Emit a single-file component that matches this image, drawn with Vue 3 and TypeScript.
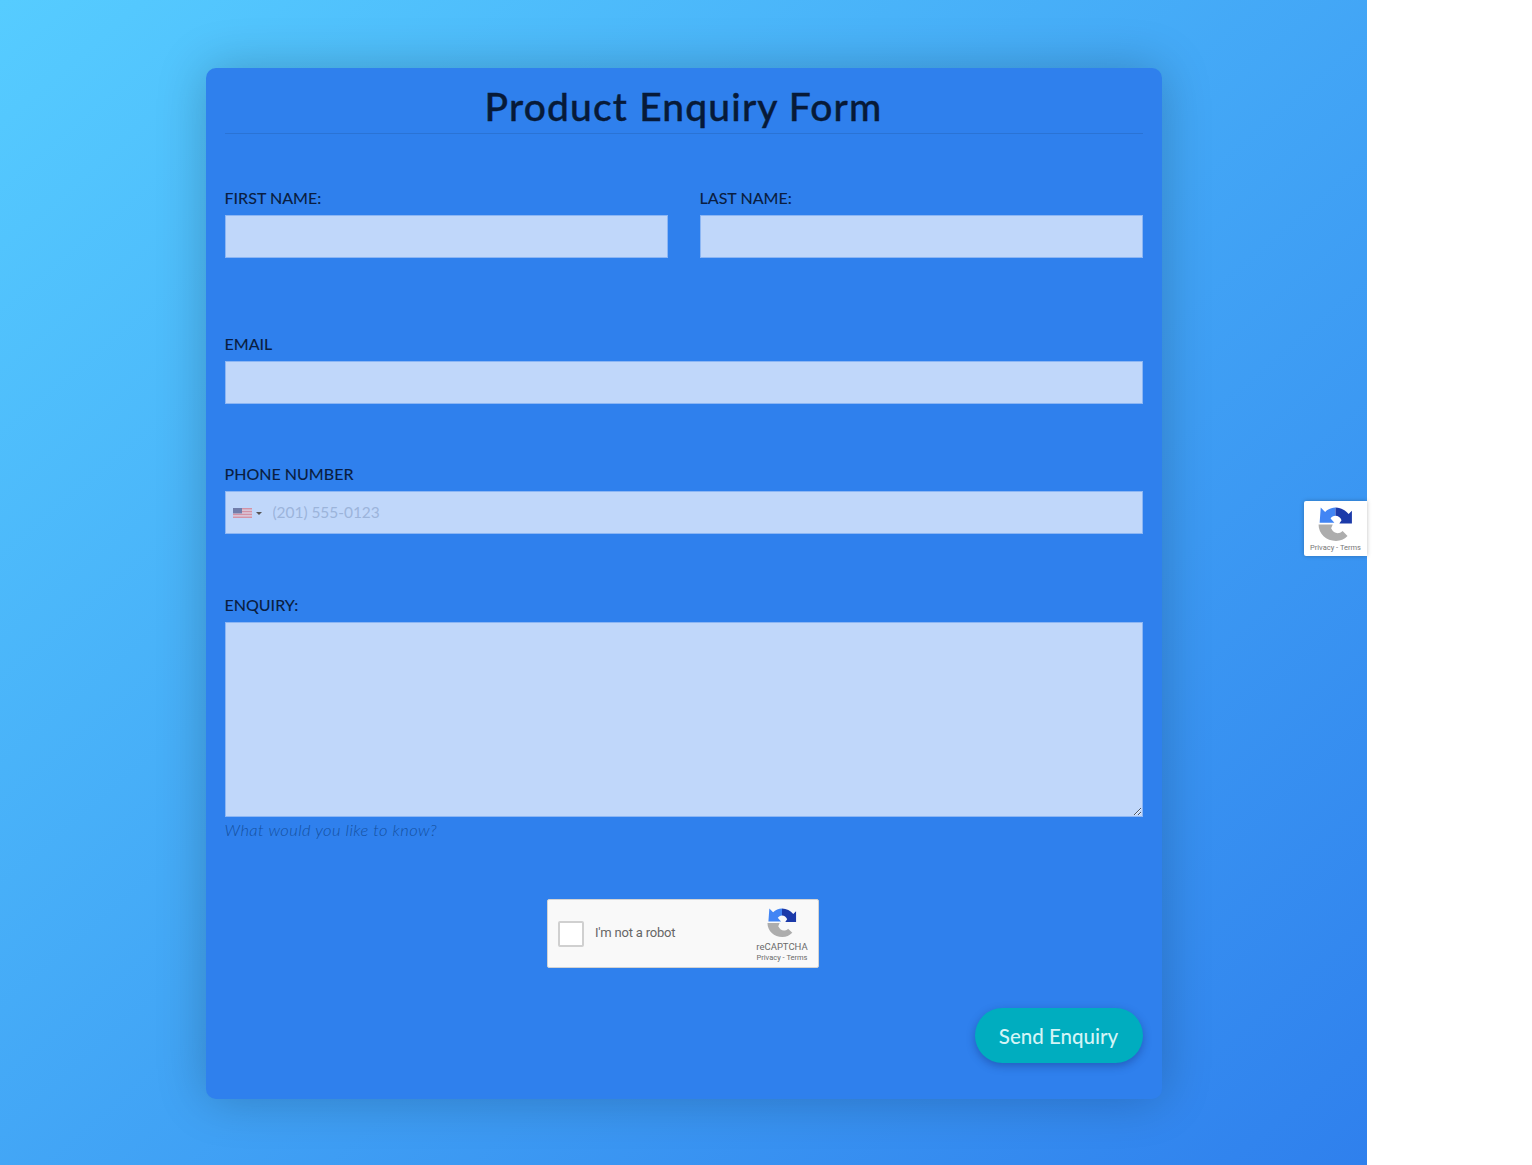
<script setup lang="ts">
const flagStripes: number[] = [0, 2, 4, 6, 8, 10, 12]

const logoParts: { d: string; fill: string }[] = [
  { d: 'M1 32H27L24 39C27 45 31 48 36 48 39 48 42 47 45 44L54 53C48 59 41 62 33 62 15 62 1 49 1 32Z', fill: '#adadad' },
  { d: 'M5 1L13 9C18 4 25 1 32 1V16C28 16 25 18 23 21L30 29H3Z', fill: '#4285f4' },
  { d: 'M32 1C42 1 50 6 56 13L62 7V30H39L43 24C41 19 37 16 32 16Z', fill: '#1c3aa9' },
]
</script>

<template>
  <div class="page">
    <form class="card" @submit.prevent>
      <h1 class="title">Product Enquiry Form</h1>

      <div class="name-row">
        <div class="field">
          <label class="label" for="first">FIRST NAME:</label>
          <input id="first" class="control" type="text" />
        </div>
        <div class="field">
          <label class="label" for="last">LAST NAME:</label>
          <input id="last" class="control" type="text" />
        </div>
      </div>

      <div class="field email-field">
        <label class="label" for="email">EMAIL</label>
        <input id="email" class="control" type="email" />
      </div>

      <div class="field phone-field">
        <label class="label" for="phone">PHONE NUMBER</label>
        <div class="phone-wrap">
          <div class="flag-picker">
            <svg class="flag" viewBox="0 0 19 10" preserveAspectRatio="none" aria-hidden="true">
              <rect width="19" height="10" fill="#f0f0f5" />
              <rect v-for="y in flagStripes" :key="y" x="0" :y="y * 0.77" width="19" height="0.77" fill="#d8404c" />
              <rect width="9" height="5.4" fill="#41477a" />
            </svg>
            <span class="caret"></span>
          </div>
          <input id="phone" class="control phone-input" type="tel" placeholder="(201) 555-0123" />
        </div>
      </div>

      <div class="field enquiry-field">
        <label class="label" for="enquiry">ENQUIRY:</label>
        <textarea id="enquiry" class="control area"></textarea>
        <div class="help">What would you like to know?</div>
      </div>

      <div class="captcha-row">
        <div class="captcha">
          <span class="checkbox"></span>
          <span class="robot">I'm not a robot</span>
          <div class="captcha-brand">
            <svg class="logo" viewBox="0 0 64 64" aria-hidden="true">
              <path v-for="part in logoParts" :key="part.fill" :d="part.d" :fill="part.fill" />
            </svg>
            <span class="brand-name">reCAPTCHA</span>
            <span class="brand-links">Privacy - Terms</span>
          </div>
        </div>
      </div>

      <div class="actions">
        <button class="send" type="submit">Send Enquiry</button>
      </div>
    </form>

    <div class="badge">
      <svg class="badge-logo" viewBox="0 0 64 64" aria-hidden="true">
        <path v-for="part in logoParts" :key="part.fill" :d="part.d" :fill="part.fill" />
      </svg>
      <span class="badge-links">Privacy - Terms</span>
    </div>
  </div>
</template>

<style>
html,
body {
  margin: 0;
  background: #fff;
}
</style>

<style scoped>
.page {
  position: relative;
  width: 1367px;
  height: 1165px;
  box-sizing: border-box;
  padding-top: 68px;
  display: flex;
  justify-content: center;
  align-items: flex-start;
  background: linear-gradient(to bottom right, #56ccff, #2f80ed);
  font-family: Lato, "Open Sans", sans-serif;
}

.card {
  width: 956px;
  height: 1031px;
  box-sizing: border-box;
  padding: 16px 19px 36px;
  background: #2f80ed;
  border-radius: 10px;
  box-shadow: 0 0 50px rgba(0, 0, 0, 0.22);
}

.title {
  margin: 0 0 54px;
  padding-bottom: 5px;
  border-bottom: 1px solid #2a73d5;
  text-align: center;
  font-size: 39px;
  line-height: 44px;
  font-weight: 500;
  letter-spacing: 1.15px;
  color: #071a38;
  -webkit-text-stroke: 0.4px #071a38;
}

.name-row {
  display: grid;
  grid-template-columns: 443px 443px;
  justify-content: space-between;
}

.field {
  display: flex;
  flex-direction: column;
}

.email-field {
  margin-top: 76px;
}

.phone-field {
  margin-top: 60px;
}

.enquiry-field {
  margin-top: 61px;
}

.label {
  height: 20px;
  margin-bottom: 7px;
  font-size: 16px;
  line-height: 20px;
  font-weight: 500;
  color: #0a1e42;
}

.control {
  display: block;
  width: 100%;
  height: 43px;
  box-sizing: border-box;
  margin: 0;
  padding: 0 8px;
  border: 1px solid #8cb6f4;
  border-radius: 0;
  outline: none;
  background: #c0d7fa;
  font-family: inherit;
  font-size: 16px;
  color: #0a1e42;
}

.phone-input {
  padding-left: 47px;
  padding-bottom: 2px;
  font-size: 15.5px;
  letter-spacing: -0.05px;
}

.phone-input::placeholder {
  color: #9cb4da;
  opacity: 1;
}

.phone-wrap {
  position: relative;
}

.flag-picker {
  position: absolute;
  left: 8px;
  top: 17px;
  display: flex;
  align-items: center;
  gap: 4px;
}

.flag {
  display: block;
  width: 19px;
  height: 10px;
  opacity: 0.62;
}

.caret {
  width: 0;
  height: 0;
  border-left: 3px solid transparent;
  border-right: 3px solid transparent;
  border-top: 3px solid #555;
}

.area {
  height: 195px;
  padding: 8px;
  resize: vertical;
}

.help {
  margin-top: 3px;
  font-size: 16.5px;
  line-height: 20px;
  letter-spacing: 0.43px;
  font-style: italic;
  font-weight: 300;
  color: #15509f;
}

.captcha-row {
  margin-top: 59px;
  display: flex;
  justify-content: center;
}

.captcha {
  width: 272px;
  height: 69px;
  box-sizing: border-box;
  margin-left: -1px;
  display: flex;
  align-items: center;
  padding: 0 10px 0 11px;
  background: #f9f9f9;
  border: 1px solid #d3d3d3;
  border-radius: 2px;
  font-family: Roboto, "Liberation Sans", sans-serif;
}

.checkbox {
  width: 26px;
  height: 26px;
  box-sizing: border-box;
  flex: none;
  margin-left: -1px;
  background: #fff;
  border: 2px solid #d0d0d0;
  border-radius: 2px;
}

.robot {
  margin-left: 11px;
  margin-bottom: 2px;
  font-size: 13px;
  letter-spacing: -0.2px;
  color: #666;
}

.captcha-brand {
  margin-left: auto;
  display: flex;
  flex-direction: column;
  align-items: center;
  width: 52px;
  margin-top: 3px;
}

.logo {
  display: block;
  width: 30px;
  height: 30px;
}

.brand-name {
  margin-top: 3px;
  font-size: 9.5px;
  line-height: 12px;
  color: #6a6a6a;
  white-space: nowrap;
}

.brand-links {
  font-size: 7.5px;
  line-height: 10px;
  color: #6a6a6a;
  white-space: nowrap;
}

.actions {
  margin-top: 40px;
  display: flex;
  justify-content: flex-end;
}

.send {
  width: 168px;
  height: 55px;
  border: none;
  border-radius: 28px;
  background: #00adbf;
  box-shadow: 0 3px 8px rgba(20, 50, 130, 0.45);
  font-family: inherit;
  font-size: 20.5px;
  font-weight: 500;
  color: #d4f4f6;
  cursor: pointer;
}

.badge {
  position: absolute;
  left: 1304px;
  top: 501px;
  width: 63px;
  height: 55px;
  box-sizing: border-box;
  padding-top: 6px;
  display: flex;
  flex-direction: column;
  align-items: center;
  background: #fff;
  border-radius: 2px 0 0 2px;
  box-shadow: 0 0 4px rgba(0, 0, 0, 0.25);
  font-family: Roboto, "Liberation Sans", sans-serif;
}

.badge-logo {
  display: block;
  width: 35px;
  height: 35px;
}

.badge-links {
  margin-top: 1px;
  font-size: 7.5px;
  line-height: 10px;
  color: #777;
  white-space: nowrap;
}
</style>
